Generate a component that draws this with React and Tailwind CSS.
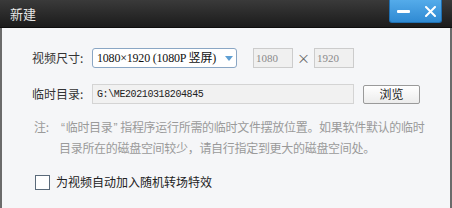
import React from "react";

const cjk = { fontFamily: '"Noto Sans CJK SC", "Noto Sans", sans-serif' };
const quote = { fontFamily: '"Liberation Sans", sans-serif' };

function TitleBar() {
  return (
    <div className="relative h-[28px] bg-gradient-to-b from-[#3a3a3a] to-[#1c1c1c] border-b border-[#0e0e0e] flex items-center">
      <span className="ml-[10px] text-[13px] text-[#e6e6e6] leading-none">新建</span>
      {/* 窗口按钮 */}
      <div className="absolute left-[389px] top-0 w-[53px] h-[23px] rounded-b-[3px] bg-gradient-to-b from-[#54abea] to-[#2f8ad3] border border-t-0 border-[#1f6fb0] flex items-center">
        <span className="ml-[7px] w-[13px] h-[3px] bg-white rounded-[1px]" />
        <svg className="ml-[15px]" width="11" height="11" viewBox="0 0 11 11">
          <path d="M1 1 L10 10 M10 1 L1 10" stroke="white" strokeWidth="2" strokeLinecap="round" />
        </svg>
      </div>
    </div>
  );
}

export default function App() {
  return (
    <div className="w-[452px] h-[208px] flex flex-col overflow-hidden bg-[#1c1c1c]" style={cjk}>
      <TitleBar />
      <div className="flex-1 bg-[#f5f6f8] border-l-2 border-r-2 border-[#6b6b6b] pl-[30px] pt-[20px] text-[12px] text-[#333]">
        {/* 视频尺寸 */}
        <div className="flex items-center h-[20px]">
          <span className="w-[60px]">视频尺寸:</span>
          <div className="w-[145px] h-[20px] bg-white border border-[#8aa6c4] rounded-[3px] flex items-center pl-[4px] pr-[3px]">
            <span className="flex-1 text-[12px] text-[#111] whitespace-nowrap tracking-[-0.2px]" style={{ fontFamily: '"Liberation Serif", "Noto Sans CJK SC", serif' }}>
              1080×1920 (1080P 竖屏)
            </span>
            <svg width="8" height="5" viewBox="0 0 8 5">
              <path d="M0 0 H8 L4 5 Z" fill="#5f9fd3" />
            </svg>
          </div>
          <div className="ml-[16px] w-[40px] h-[20px] bg-[#f0f0f0] border border-[#cccccc] flex items-center pl-[2px] text-[11px] text-[#8a8a8a]" style={{ fontFamily: '"Liberation Serif", serif' }}>
            1080
          </div>
          <span className="w-[21px] text-center text-[13px] text-[#666]">×</span>
          <div className="w-[40px] h-[20px] bg-[#f0f0f0] border border-[#cccccc] flex items-center pl-[2px] text-[11px] text-[#8a8a8a]" style={{ fontFamily: '"Liberation Serif", serif' }}>
            1920
          </div>
        </div>

        {/* 临时目录 */}
        <div className="flex items-center h-[20px] mt-[16px]">
          <span className="w-[60px]">临时目录:</span>
          <div className="w-[262px] h-[20px] bg-[#f1f1f1] border border-[#d4d4d4] flex items-center pl-[4px] text-[10px] tracking-[-0.4px] text-[#222]" style={{ fontFamily: '"Liberation Mono", monospace' }}>
            G:\ME20210318204845
          </div>
          <button className="ml-[9px] w-[57px] h-[19px] bg-gradient-to-b from-white to-[#ececec] border border-[#9a9a9a] rounded-[2px] text-[12px] text-[#222] leading-none">
            浏览
          </button>
        </div>

        {/* 注释 */}
        <div className="mt-[13px] flex text-[12px] leading-[20px] text-[#9a9a9a] whitespace-nowrap tracking-[-0.3px]">
          <span className="w-[27px] shrink-0 pl-[2px]">注:</span>
          <span>
            <span className="ml-[2px] mr-[1px]" style={quote}>“</span>临时目录<span className="ml-[1px] mr-[3px]" style={quote}>”</span>指程序运行所需的临时文件摆放位置。如果软件默认的临时
            <br />
            目录所在的磁盘空间较少，请自行指定到更大的磁盘空间处。
          </span>
        </div>

        {/* 复选框 */}
        <label className="mt-[16px] flex items-center h-[16px]">
          <span className="ml-[3px] w-[15px] h-[15px] bg-white border border-[#5a6a7a]" />
          <span className="ml-[6px] text-[12px] text-[#222]">为视频自动加入随机转场特效</span>
        </label>
      </div>
    </div>
  );
}
